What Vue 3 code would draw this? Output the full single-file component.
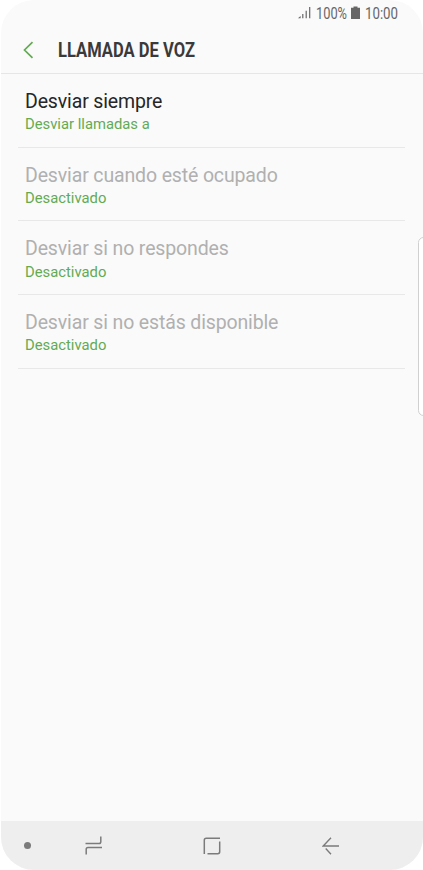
<template>
  <div class="phone">
    <header class="status-bar">
      <svg class="signal" width="13" height="13" viewBox="0 0 13 13">
        <path d="M0 12.3L2.6 10V12.3Z" fill="#666" />
        <path
          d="M4.8 8V12.3M8.2 4.7V12.3M11.7 1V12.3"
          fill="none"
          stroke="#666"
          stroke-width="1.2"
        />
      </svg>
      <svg class="percent" width="32" height="20">
        <text x="0" y="13" textLength="31" lengthAdjust="spacingAndGlyphs">100%</text>
      </svg>
      <svg class="battery" width="9" height="13" viewBox="0 0 9 13">
        <path d="M2.5 0.5H6.5V1.8H9V13H0V1.8H2.5Z" fill="#666" />
      </svg>
      <svg class="clock" width="34" height="20">
        <text x="0" y="13" textLength="33" lengthAdjust="spacingAndGlyphs">10:00</text>
      </svg>
    </header>

    <div class="title-bar">
      <svg class="back" width="12" height="18" viewBox="0 0 12 18">
        <path
          d="M10.5 1.2L2.5 9L10.5 16.8"
          fill="none"
          stroke="#63aa53"
          stroke-width="1.7"
        />
      </svg>
      <svg class="title" width="150" height="28">
        <text x="0" y="21" textLength="137" lengthAdjust="spacingAndGlyphs">LLAMADA DE VOZ</text>
      </svg>
    </div>

    <main class="content">
      <ul class="options">
        <li
          v-for="option in options"
          :key="option.name"
          class="option"
          :class="{ disabled: !option.enabled }"
        >
          <div class="option-name">{{ option.name }}</div>
          <div class="option-status">{{ option.status }}</div>
        </li>
      </ul>
      <div class="edge-handle"></div>
    </main>

    <nav class="nav-bar">
      <span class="dot"></span>
      <svg class="recents" width="18" height="19" viewBox="0 0 18 19">
        <path
          d="M0.5 7.5H14Q15.8 7.5 15.8 5.7V0.5M17 11.5H3Q1.2 11.5 1.2 13.3V18.5"
          fill="none"
          stroke="#7b7b7b"
          stroke-width="1.5"
        />
      </svg>
      <svg class="home" width="18" height="18" viewBox="0 0 18 18">
        <path
          d="M1.3 17V3.2Q1.3 1.3 3.2 1.3H17M16.7 4.5V14.8Q16.7 16.7 14.8 16.7H4.5"
          fill="none"
          stroke="#7b7b7b"
          stroke-width="1.5"
        />
      </svg>
      <svg class="return" width="18" height="18" viewBox="0 0 18 18">
        <path
          d="M17 9H1.2L9 0.8M3.7 11.6L9 17.2"
          fill="none"
          stroke="#7b7b7b"
          stroke-width="1.4"
        />
      </svg>
    </nav>
  </div>
</template>

<script setup>
import { ref } from "vue";

const options = ref([
  { name: "Desviar siempre", status: "Desviar llamadas a", enabled: true },
  { name: "Desviar cuando esté ocupado", status: "Desactivado", enabled: false },
  { name: "Desviar si no respondes", status: "Desactivado", enabled: false },
  {
    name: "Desviar si no estás disponible",
    status: "Desactivado",
    enabled: false
  }
]);
</script>

<style>
body {
  background: #fff;
}
</style>

<style scoped>
.phone {
  box-sizing: border-box;
  display: flex;
  flex-direction: column;
  width: 422px;
  height: 870px;
  margin-left: 1px;
  overflow: hidden;
  border-radius: 33px;
  background: #fafafa;
  font-family: Roboto, sans-serif;
}

.status-bar {
  display: flex;
  align-items: flex-start;
  height: 27px;
  padding: 6px 24.5px 0 0;
  box-sizing: border-box;
  justify-content: flex-end;
  flex-shrink: 0;
}

.status-bar svg,
.title {
  overflow: visible;
}

.status-bar text {
  font-size: 16px;
  fill: #666;
}

.signal {
  margin-right: 5px;
}

.percent {
  margin-right: 3px;
}

.battery {
  margin-right: 5px;
}

.title-bar {
  display: flex;
  align-items: center;
  height: 46px;
  padding-left: 21px;
  border-bottom: 1px solid #e6e6e6;
  flex-shrink: 0;
}

.title {
  margin-left: 24px;
}

.title text {
  font-size: 20px;
  font-weight: 700;
  fill: #3a3a3a;
}

.content {
  position: relative;
  flex: 1;
}

.options {
  margin: 0;
  padding: 0 18px 0 17px;
  list-style: none;
}

.option {
  box-sizing: border-box;
  height: 73.7px;
  padding: 15px 7px 0;
  border-bottom: 1px solid #e8e8e8;
}

.option-name {
  font-size: 19.5px;
  line-height: 25px;
  letter-spacing: -0.14px;
  color: #262626;
}

.disabled .option-name {
  color: #b0b0b0;
}

.option-status {
  margin-top: 0.3px;
  font-size: 14.8px;
  line-height: 20px;
  color: #63aa53;
}

.edge-handle {
  position: absolute;
  top: 163px;
  right: -6px;
  box-sizing: border-box;
  width: 11px;
  height: 179px;
  border: 1px solid #d0d0d0;
  border-radius: 6px;
  background: #fff;
}

.nav-bar {
  display: flex;
  align-items: center;
  height: 49px;
  padding-left: 23px;
  background: #eee;
  flex-shrink: 0;
}

.dot {
  width: 7px;
  height: 7px;
  border-radius: 50%;
  background: #7b7b7b;
}

.recents {
  margin-left: 54px;
}

.home {
  margin-left: 100px;
}

.return {
  margin-left: 101px;
}
</style>
